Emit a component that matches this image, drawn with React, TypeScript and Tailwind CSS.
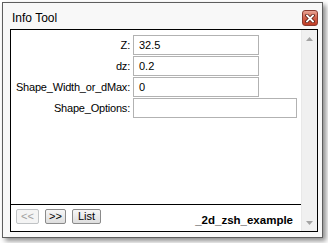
const fields = [
    { label: 'Z:', value: '32.5', wide: false },
    { label: 'dz:', value: '0.2', wide: false },
    { label: 'Shape_Width_or_dMax:', value: '0', wide: false },
    { label: 'Shape_Options:', value: '', wide: true },
];

const CloseButton = () => (
    <div className="mt-[7px] w-[16px] h-[16px] rounded-[3px] border border-[#8a3a30] bg-gradient-to-b from-[#e9a596] via-[#d2604a] to-[#c03c24] flex items-center justify-center">
        <svg width="10" height="9" viewBox="0 0 10 9">
            <path d="M2 1.5 L8 7.5 M8 1.5 L2 7.5" stroke="#5a1d14" strokeWidth="3.4" strokeLinecap="square" />
            <path d="M2 1.5 L8 7.5 M8 1.5 L2 7.5" stroke="#ffffff" strokeWidth="1.8" strokeLinecap="square" />
        </svg>
    </div>
);

const Arrow = ({ down }: { down?: boolean }) => (
    <svg width="7" height="4" viewBox="0 0 7 4">
        <path d={down ? 'M0 0 H7 L3.5 4 Z' : 'M0 4 H7 L3.5 0 Z'} fill="#a3a3a3" />
    </svg>
);

const App = () => {
    return (
        <div className="w-[328px] h-[243px] bg-white pt-[2px] pl-[2px] font-['Liberation_Sans',Arial,sans-serif] text-black">
            <div className="w-[321px] h-[236px] border border-[#5e5e5e] bg-[#f8f8f8] shadow-[3px_3px_5px_rgba(0,0,0,0.45)] flex flex-col pl-[7px] pr-[4px] pb-[5px]">
                <div className="h-[26px] flex items-start justify-between shrink-0">
                    <span className="text-[12px] leading-[14px] pt-[8px] pl-[2px]">Info Tool</span>
                    <CloseButton />
                </div>
                <div className="flex-1 border border-black bg-white flex min-h-0">
                    <div className="flex-1 flex flex-col">
                        <div className="flex-1 pt-[5px] flex flex-col gap-[1px]">
                            {fields.map(f => (
                                <div key={f.label} className="flex items-center h-[20px]">
                                    <span className="w-[120px] text-right text-[11px] tracking-[-0.2px] leading-[20px] pr-[1px]">{f.label}</span>
                                    <div className={`ml-[2px] h-[20px] border border-[#b2b2b2] bg-white text-[11px] leading-[18px] pl-[5px] ${f.wide ? 'w-[164px]' : 'w-[126px]'}`}>
                                        {f.value}
                                    </div>
                                </div>
                            ))}
                        </div>
                        <div className="h-[27px] border-t border-black flex items-start pt-[4px] pl-[5px] pr-[8px]">
                            <div className="flex gap-[6px]">
                                <button className="w-[23px] h-[15px] rounded-[2px] border border-[#c0c3c5] bg-[#f4f4f4] text-[11px] leading-[13px] text-[#a0a0a0] flex items-center justify-center">&lt;&lt;</button>
                                <button className="w-[21px] h-[15px] rounded-[2px] border border-[#8a8a8a] bg-gradient-to-b from-[#f6f6f6] to-[#dedede] text-[11px] leading-[13px] flex items-center justify-center">&gt;&gt;</button>
                                <button className="w-[29px] h-[15px] rounded-[2px] border border-[#8a8a8a] bg-gradient-to-b from-[#f6f6f6] to-[#dedede] text-[11px] leading-[13px] flex items-center justify-center">List</button>
                            </div>
                            <span className="ml-auto text-[11.5px] font-bold leading-[14px] pt-[4px]">_2d_zsh_example</span>
                        </div>
                    </div>
                    <div className="w-[16px] bg-[#f0f0f0] border-l border-[#e8e8e8] flex flex-col justify-between items-center">
                        <div className="h-[17px] flex items-center justify-center pt-[1px]"><Arrow /></div>
                        <div className="h-[17px] flex items-center justify-center"><Arrow down /></div>
                    </div>
                </div>
            </div>
        </div>
    );
};

export default App;
